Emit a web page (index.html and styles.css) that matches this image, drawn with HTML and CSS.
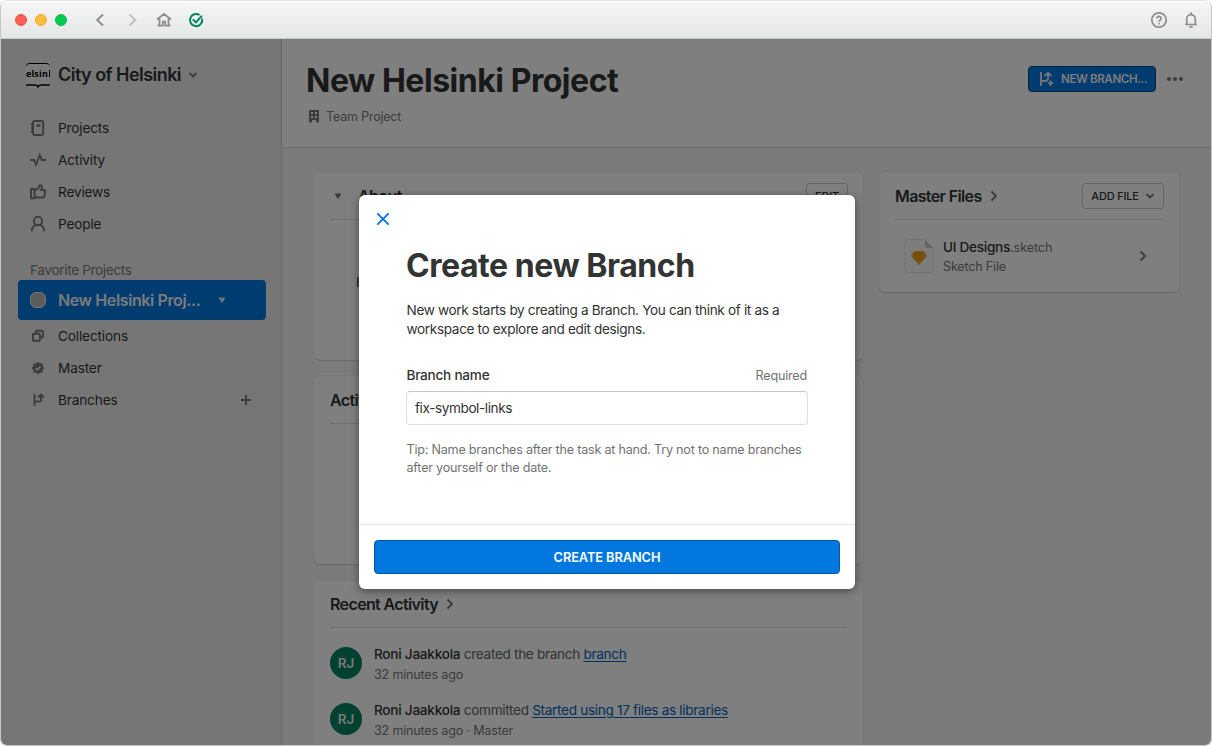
FILE: index.html
```html
<!DOCTYPE html>
<html lang="en">
<head>
<meta charset="utf-8">
<title>New Helsinki Project</title>
<link rel="stylesheet" href="styles.css">
</head>
<body>
<div class="window">
  <header class="titlebar">
    <div class="lights"><i class="light red"></i><i class="light yellow"></i><i class="light green"></i></div>
    <nav class="history">
      <svg width="16" height="16" viewBox="0 0 16 16" class="line g1"><path d="M11 2.500 5.200 8l5.800 5.500"/></svg>
      <svg width="16" height="16" viewBox="0 0 16 16" class="line g2"><path d="M5.500 2.500 11.300 8l-5.800 5.500"/></svg>
      <svg width="16" height="16" viewBox="0 0 16 16" class="line g3"><path d="M1 7.400 8 2l7 5.400M3.500 6.500V13M12.500 6.500V13M1.500 13.600H6.800V9.600h2.400v4h5.300"/></svg>
      <svg width="16" height="16" viewBox="0 0 16 16" class="line tick"><path d="M14 6.500A6.100 6.100 0 1 1 11.500 3M4.800 7.400l3.100 3L14 3.700"/></svg>
    </nav>
    <div class="tools">
      <svg width="18" height="18" viewBox="0 0 18 18" class="line g4"><circle cx="9" cy="9" r="7.200"/><path d="M6.900 7.500a2.100 2.100 0 1 1 3.200 1.700c-.8.500-1.100.7-1.100 1.500M9 12v1.500"/></svg>
      <svg width="18" height="18" viewBox="0 0 18 18" class="line g4"><path d="M3 13.500h12M4.700 13.500V8a4.300 4.300 0 0 1 8.600 0v5.500M9 1.300v2.200M7.300 15.900h3.400"/></svg>
    </div>
  </header>

  <div class="body">
    <aside class="sidebar">
      <div class="org">
        <span class="logo"><span class="word"><b>elsin</b><i class="stem"></i></span><svg width="24" height="5" viewBox="0 0 24 5"><path d="M0 1h8.500c2 0 3 .5 3.500 1.800C12.500 1.500 13.500 1 15.500 1H24"/></svg></span>
        <span class="org-name">City of Helsinki</span>
        <svg width="10" height="8" viewBox="0 0 10 8" class="line chev"><path d="m1.500 2 3.500 3.500L8.500 2"/></svg>
      </div>
      <ul class="nav">
        <li><svg width="16" height="16" viewBox="0 0 16 16" class="line"><rect x="3" y="1" width="10.200" height="14" rx="1.500"/><path d="M1 4.500h3M1 8h3M1 11.500h3"/><path class="tag" d="M6.500 5.500h4"/></svg><span>Projects</span></li>
        <li><svg width="16" height="16" viewBox="0 0 16 16" class="line"><path d="M0 8h4l2 4.800L9.800 3l2 5H16"/></svg><span>Activity</span></li>
        <li><svg width="16" height="16" viewBox="0 0 16 16" class="line"><path d="M1 5h3.500v9.200H1zM4.500 7l4-2.800.8-2.500c.3-1 2.700-.6 2.500 1.300l-.6 3H14c1 0 1.300.7 1.200 1.500l-.8 4.500c-.2 1-.8 1.500-1.700 1.500H7l-2.500-1"/></svg><span>Reviews</span></li>
        <li><svg width="16" height="16" viewBox="0 0 16 16" class="line"><circle cx="8" cy="5" r="4.200"/><path d="M1.800 15.300c0-3.500 1.700-5.800 4.200-6.500M14.200 15.300c0-3.500-1.700-5.800-4.200-6.500"/></svg><span>People</span></li>
      </ul>
      <div class="label">Favorite Projects</div>
      <div class="project"><i class="swatch"></i><span>New Helsinki Proj...</span><svg width="8" height="6" viewBox="0 0 8 6"><path d="M.5.500h7L4.600 5.500H3.400z"/></svg></div>
      <ul class="nav">
        <li><svg width="16" height="16" viewBox="0 0 16 16" class="line"><path d="M5.800 5V3.600c0-.5.300-.8.800-.8h5.600c.5 0 .8.300.8.800v5.100c0 .5-.3.800-.8.800h-1.500"/><rect x="3" y="5.800" width="7" height="7" rx=".8"/></svg><span>Collections</span></li>
        <li><svg width="16" height="16" viewBox="0 0 16 16"><g class="seal"><circle cx="8" cy="8" r="4.700"/><circle cx="8" cy="3.500" r="1.600"/><circle cx="11.200" cy="4.800" r="1.600"/><circle cx="12.500" cy="8" r="1.600"/><circle cx="11.200" cy="11.200" r="1.600"/><circle cx="8" cy="12.500" r="1.600"/><circle cx="4.800" cy="11.200" r="1.600"/><circle cx="3.500" cy="8" r="1.600"/><circle cx="4.800" cy="4.800" r="1.600"/></g><path class="seal-tick" d="m5.500 8 1.800 1.800 3.200-3.400"/></svg><span>Master</span></li>
        <li><svg width="16" height="16" viewBox="0 0 16 16" class="line"><path d="M4.500 2v12M4.500 9.500h5c1 0 1.500-.5 1.500-1.500V3.500M8 5.500l3-3 3 3"/></svg><span>Branches</span><svg width="12" height="12" viewBox="0 0 12 12" class="line plus"><path d="M6 1v10M1 6h10"/></svg></li>
      </ul>
    </aside>

    <main class="main">
      <header class="page-head">
        <div>
          <h1>New Helsinki Project</h1>
          <div class="team"><svg width="12" height="13" viewBox="0 0 12 13"><path fill-rule="evenodd" d="M1 0h10v12.500H8V10H4v2.500H1zM3 2v2h2V2zm4 0v2h2V2zM3 6v2h2V6zm4 0v2h2V6z"/></svg><span>Team Project</span></div>
        </div>
        <div class="actions">
          <button class="new-branch"><svg width="16" height="16" viewBox="0 0 16 16"><path d="M2 1v14M2 10h4c2 0 3-1 3-3V2M5.500 5 9 1.700 12.500 5M11.500 9.500v5.400M8.800 12.200h5.400"/></svg><span>NEW BRANCH...</span></button>
          <svg width="16" height="4" viewBox="0 0 16 4" class="dots"><circle cx="2" cy="2" r="2"/><circle cx="8" cy="2" r="2"/><circle cx="14" cy="2" r="2"/></svg>
        </div>
      </header>
      <div class="columns">
        <div class="left">
          <section class="card short">
            <div class="card-head"><svg width="8" height="6" viewBox="0 0 8 6" class="disclose"><path d="M.5.500h7L4.600 5.500H3.400z"/></svg><h2>About</h2><button class="small edit">EDIT</button></div>
            <p class="about-text">H</p>
          </section>
          <section class="card short">
            <div class="card-head"><h2>Active</h2></div>
          </section>
          <section class="card recent">
            <div class="card-head"><h2>Recent Activity</h2><svg width="8" height="12" viewBox="0 0 8 12" class="line arrow"><path d="m1.500 1.500 4.500 4.500-4.500 4.500"/></svg></div>
            <div class="event"><span class="avatar">RJ</span><div><p class="what"><b>Roni Jaakkola</b> created the branch <a>branch</a></p><p class="when">32 minutes ago</p></div></div>
            <div class="event"><span class="avatar">RJ</span><div><p class="what"><b>Roni Jaakkola</b> committed <a>Started using 17 files as libraries</a></p><p class="when">32 minutes ago · Master</p></div></div>
          </section>
        </div>
        <section class="card files">
          <div class="card-head"><h2>Master Files</h2><svg width="8" height="12" viewBox="0 0 8 12" class="line arrow"><path d="m1.500 1.500 4.500 4.500-4.500 4.500"/></svg><button class="small add"><span>ADD FILE</span><svg width="10" height="8" viewBox="0 0 10 8" class="line"><path d="m1.500 2 3.500 3.500L8.500 2"/></svg></button></div>
          <div class="file">
            <svg width="30" height="34" viewBox="0 0 30 34"><path class="sheet" d="M4 .5h17l8.500 8.500v21a3.500 3.500 0 0 1-3.500 3.500H4A3.500 3.500 0 0 1 .5 30V4A3.500 3.500 0 0 1 4 .5z"/><path class="fold" d="M21 1v6a2 2 0 0 0 2 2h6z"/><path class="gem" d="m10 12.600 5-.6 5 .6 3 4.400-8 8.800L7 17z"/></svg>
            <div class="file-name"><p><b>UI Designs</b><span>.sketch</span></p><p class="kind">Sketch File</p></div>
            <svg width="8" height="12" viewBox="0 0 8 12" class="line arrow"><path d="m1.500 1.500 4.500 4.500-4.500 4.500"/></svg>
          </div>
        </section>
      </div>
    </main>
    <div class="scrim"></div>
  </div>
</div>

<div class="modal">
  <div class="modal-body">
    <svg width="14" height="14" viewBox="0 0 14 14" class="close"><path d="m1.300 1.300 11.400 11.400M12.700 1.300 1.300 12.700"/></svg>
    <h3>Create new Branch</h3>
    <p class="intro">New work starts by creating a Branch. You can think of it as a<br>workspace to explore and edit designs.</p>
    <div class="field-head"><label for="branch">Branch name</label><span>Required</span></div>
    <input id="branch" type="text" value="fix-symbol-links">
    <p class="tip">Tip: Name branches after the task at hand. Try not to name branches<br>after yourself or the date.</p>
  </div>
  <div class="modal-foot"><button>CREATE BRANCH</button></div>
</div>
</body>
</html>
```
FILE: styles.css
```css
* { box-sizing: border-box; }
body { margin: 0; width: 1212px; height: 748px; overflow: hidden; background: #fff; font: 13.6px/20px Inter, sans-serif; color: #313433; position: relative; }
h1, h2, h3, p, ul { margin: 0; padding: 0; }
b { font-weight: 500; }
button { font-family: inherit; margin: 0; padding: 0; }
svg { display: block; flex: none; }
.line { fill: none; stroke: #78797a; stroke-width: 1.9; }

.window { width: 1212px; height: 746px; border: 1px solid #c5c7c7; border-top-color: #e3e3e3; border-radius: 7px; overflow: hidden; display: flex; flex-direction: column; }
.titlebar { height: 38px; flex: none; display: flex; align-items: center; padding: 0 11px 0 14px; background: linear-gradient(#f5f5f5, #e5e7e6); border-top: 1px solid #fff; border-bottom: 1px solid #c8cac9; }
.lights { display: flex; gap: 8px; }
.light { width: 12px; height: 12px; border-radius: 50%; }
.red { background: #ff5f57; border: 1px solid #ee5049; }
.yellow { background: #ffbd3e; border: 1px solid #eba936; }
.green { background: #06c951; border: 1px solid #04b746; }
.history { display: flex; gap: 16px; margin-left: 25px; }
.g1, .g3 { stroke: #8d8f8f; }
.g2 { stroke: #bfc0c0; }
.g3 { stroke-width: 1.8; }
.tick { stroke: #008561; stroke-width: 2; }
.tools { display: flex; gap: 14px; margin-left: auto; }
.g4 { stroke: #8c8f8e; stroke-width: 1.7; }

.body { flex: 1; min-height: 0; display: flex; position: relative; }
.scrim { position: absolute; inset: 0; background: rgba(0, 0, 0, .5); }
.sidebar { width: 281px; flex: none; background: #ececec; border-right: 1px solid #d2d2d2; padding: 23px 15px 0 17px; }
.org { height: 26px; display: flex; align-items: center; padding-left: 8px; }
.logo { width: 24px; height: 25px; border-top: 1px solid #000; border-radius: 4px; background: #f6f6f6; overflow: hidden; display: flex; flex-direction: column; justify-content: space-between; }
.word { display: flex; align-items: center; height: 20px; }
.word b { width: 22.5px; font: bold 9px/20px "Open Sans", sans-serif; letter-spacing: .15px; color: #000; white-space: nowrap; }
.stem { width: 1.500px; height: 7px; background: #000; }
.logo svg path { fill: none; stroke: #000; stroke-width: 1.5; }
.org-name { font-size: 18px; font-weight: 600; letter-spacing: -.54px; margin-left: 8px; white-space: nowrap; }
.chev { margin-left: 7px; }
.nav { list-style: none; }
.org + .nav { padding-top: 24px; }
.nav li { height: 32px; display: flex; align-items: center; padding: 0 14px 0 12px; }
.nav li span { margin-left: 12px; letter-spacing: -.14px; }
.nav .plus { margin-left: auto; }
.tag { stroke-width: 2.4; }
.seal { fill: #777; }
.seal-tick { fill: none; stroke: #ececec; stroke-width: 1.5; }
.label { height: 40px; padding: 20px 0 0 12px; color: #777978; letter-spacing: -.35px; line-height: 20px; }
.project { height: 40px; border-radius: 4px; background: #0078e0; display: flex; align-items: center; padding-left: 12px; color: #f4f4f4; font-size: 16px; font-weight: 600; }
.swatch { width: 16px; height: 16px; border-radius: 6px; border: 1px solid #e8e8e8; background: #b7bcbb; }
.project span { margin-left: 12px; white-space: nowrap; letter-spacing: -.38px; }
.project svg { margin-left: 18px; fill: #e5e5e5; }

.main { flex: 1; min-width: 0; background: #f6f6f6; }
.page-head { height: 109px; background: #fff; border-bottom: 1px solid #dcdcdc; padding: 20px 28px 0 25px; display: flex; justify-content: space-between; }
h1 { font-size: 32px; line-height: 42px; font-weight: 700; letter-spacing: -.47px; white-space: nowrap; margin: 1px 0 0 -1px; }
.team { display: flex; align-items: center; margin: 3px 0 0 1px; font-size: 12.6px; letter-spacing: -.24px; color: #797b7a; }
.team span { margin-left: 6px; padding-top: 2px; }
.team svg { fill: #797b7c; }
.actions { display: flex; gap: 11px; height: 40px; align-items: center; }
.new-branch { width: 128px; height: 26px; border: 1px solid #00468a; border-radius: 4px; background: #0078e0; color: #f6f6f6; font-size: 11.6px; letter-spacing: -.4px; font-weight: 600; display: flex; align-items: center; padding-left: 10px; }
.new-branch span { margin-left: 6px; white-space: nowrap; }
.new-branch svg path { fill: none; stroke: #eee; stroke-width: 1.8; }
.dots { fill: #777; }
.columns { display: flex; gap: 16px; padding: 24px 31px 0 32px; align-items: flex-start; }
.left { width: 549px; display: flex; flex-direction: column; gap: 16px; }
.card { background: #fff; border-radius: 6px; box-shadow: 0 0 0 1px rgba(0, 0, 0, .03), 0 1px 1px rgba(0, 0, 0, .12); padding: 0 16px; }
.short { height: 188px; }
.recent { height: 200px; }
.files { flex: 1; height: 120px; }
.card-head { height: 48px; border-bottom: 1px solid #dcdede; display: flex; align-items: center; }
h2 { font-size: 16px; line-height: 20px; font-weight: 600; letter-spacing: -.63px; white-space: nowrap; }
.arrow { margin-left: 8px; }
.disclose { fill: #777; margin: 0 16px 0 4px; }
.small { border: 1px solid #c9cbcb; border-radius: 3px; background: transparent; color: #313433; font-size: 11px; letter-spacing: -.2px; font-weight: 500; height: 26px; display: flex; align-items: center; justify-content: center; margin-left: auto; }
.edit { width: 42px; margin-right: -1px; }
.add { width: 82px; gap: 6px; white-space: nowrap; }
.about-text { padding: 52px 0 0 26px; }
.event { display: flex; padding-top: 16px; height: 56px; }
.avatar { width: 32px; height: 32px; flex: none; margin-top: 3px; border-radius: 50%; background: #008363; color: #ececec; font-size: 13.5px; line-height: 32px; font-weight: 600; text-align: center; }
.event > div { margin-left: 12px; white-space: nowrap; }
.what { color: #636664; letter-spacing: -.32px; }
.what b { color: #313433; letter-spacing: -.25px; }
.what a { color: #005fb8; text-decoration: underline; text-underline-offset: 2px; }
.when { padding-top: 1px; font-size: 12.6px; letter-spacing: -.2px; color: #747675; }
.file { display: flex; align-items: center; height: 72px; padding: 0 17px 0 9px; }
.file-name { margin: 2px auto 0 9px; }
.file-name p { line-height: 19px; color: #757776; white-space: nowrap; }
.file-name b { color: #313433; letter-spacing: -.28px; }
.file-name span { font-size: 12.6px; letter-spacing: -.1px; }
.file-name .kind { font-size: 12.6px; letter-spacing: -.2px; }
.sheet { fill: #fafafa; stroke: #e8e9e9; }
.fold { fill: #c7caca; }
.gem { fill: #f1a11d; }

.modal { position: absolute; left: 359px; top: 195px; width: 496px; height: 394px; border-radius: 6px; background: #fff; box-shadow: 0 2px 8px rgba(0, 0, 0, .45); display: flex; flex-direction: column; }
.modal-body { height: 330px; border-bottom: 1px solid #e4e5e5; padding: 17px 47px 0; }
.close { margin-left: -30px; }
.close path { stroke: #0078e0; stroke-width: 1.9; fill: none; }
h3 { font-size: 32px; line-height: 40px; font-weight: 700; margin: 20px 0 0; letter-spacing: -.45px; white-space: nowrap; }
.intro { line-height: 19px; letter-spacing: -.35px; margin: 15px 0 0 .5px; white-space: nowrap; }
.field-head { display: flex; justify-content: space-between; margin: 26px 1px 6px .5px; font-weight: 500; letter-spacing: -.25px; height: 20px; }
.field-head span { font-size: 12.6px; font-weight: 400; letter-spacing: -.2px; color: #707372; padding-top: 1px; }
input { display: block; width: 402px; height: 34px; border: 1px solid #dedfdf; border-top-color: #c6c8c8; border-radius: 4px; padding: 0 8px 1px; font: 13.6px Inter, sans-serif; letter-spacing: -.42px; color: #313433; background: #fff; outline: none; }
.tip { font-size: 12.6px; line-height: 18px; letter-spacing: -.22px; color: #707372; margin: 16px 0 0 .5px; white-space: nowrap; }
.modal-foot { padding: 15px; }
.modal-foot button { display: block; width: 100%; height: 34px; border: 1px solid #00579f; border-radius: 4px; background: #0078e0; color: #fff; font-size: 12.8px; letter-spacing: -.08px; font-weight: 600; }
```
